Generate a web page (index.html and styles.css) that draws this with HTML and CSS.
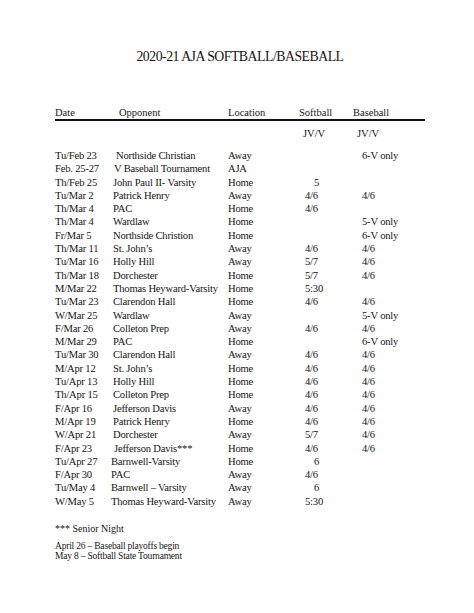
FILE: index.html
```html
<!DOCTYPE html>
<html>
<head>
<meta charset="utf-8">
<link rel="stylesheet" href="styles.css">
</head>
<body>
<div class="page">
  <h1 class="title">2020-21 AJA SOFTBALL/BASEBALL</h1>
  <div class="head">
    <span class="h-date">Date</span>
    <span class="h-opp">Opponent</span>
    <span class="h-loc">Location</span>
    <span class="h-sb">Softball</span>
    <span class="h-bb">Baseball</span>
  </div>
  <div class="sub">
    <span class="s-sb">JV/V</span>
    <span class="s-bb">JV/V</span>
  </div>
  <div class="rows">
    <div class="row"><span>Tu/Feb 23</span><span class="ind">Northside Christian</span><span>Away</span><span></span><span>6-V only</span></div>
    <div class="row"><span>Feb. 25-27</span><span class="ind1">V Baseball Tournament</span><span>AJA</span><span></span><span></span></div>
    <div class="row"><span>Th/Feb 25</span><span>John Paul II- Varsity</span><span>Home</span><span class="c">5</span><span></span></div>
    <div class="row"><span>Tu/Mar 2</span><span>Patrick Henry</span><span>Away</span><span>4/6</span><span>4/6</span></div>
    <div class="row"><span>Th/Mar 4</span><span>PAC</span><span>Home</span><span>4/6</span><span></span></div>
    <div class="row"><span>Th/Mar 4</span><span>Wardlaw</span><span>Home</span><span></span><span>5-V only</span></div>
    <div class="row"><span>Fr/Mar 5</span><span>Northside Christion</span><span>Home</span><span></span><span>6-V only</span></div>
    <div class="row"><span>Th/Mar 11</span><span>St. John’s</span><span>Away</span><span>4/6</span><span>4/6</span></div>
    <div class="row"><span>Tu/Mar 16</span><span>Holly Hill</span><span>Away</span><span>5/7</span><span>4/6</span></div>
    <div class="row"><span>Th/Mar 18</span><span>Dorchester</span><span>Home</span><span>5/7</span><span>4/6</span></div>
    <div class="row"><span>M/Mar 22</span><span>Thomas Heyward-Varsity</span><span>Home</span><span>5:30</span><span></span></div>
    <div class="row"><span>Tu/Mar 23</span><span>Clarendon Hall</span><span>Home</span><span>4/6</span><span>4/6</span></div>
    <div class="row"><span>W/Mar 25</span><span>Wardlaw</span><span>Away</span><span></span><span>5-V only</span></div>
    <div class="row"><span>F/Mar 26</span><span>Colleton Prep</span><span>Away</span><span>4/6</span><span>4/6</span></div>
    <div class="row"><span>M/Mar 29</span><span>PAC</span><span>Home</span><span></span><span>6-V only</span></div>
    <div class="row"><span>Tu/Mar 30</span><span>Clarendon Hall</span><span>Away</span><span>4/6</span><span>4/6</span></div>
    <div class="row"><span>M/Apr 12</span><span>St. John’s</span><span>Home</span><span>4/6</span><span>4/6</span></div>
    <div class="row"><span>Tu/Apr 13</span><span>Holly Hill</span><span>Home</span><span>4/6</span><span>4/6</span></div>
    <div class="row"><span>Th/Apr 15</span><span>Colleton Prep</span><span>Home</span><span>4/6</span><span>4/6</span></div>
    <div class="row"><span>F/Apr 16</span><span>Jefferson Davis</span><span>Away</span><span>4/6</span><span>4/6</span></div>
    <div class="row"><span>M/Apr 19</span><span>Patrick Henry</span><span>Home</span><span>4/6</span><span>4/6</span></div>
    <div class="row"><span>W/Apr 21</span><span>Dorchester</span><span>Away</span><span>5/7</span><span>4/6</span></div>
    <div class="row"><span>F/Apr 23</span><span class="ind1">Jefferson Davis***</span><span>Home</span><span>4/6</span><span>4/6</span></div>
    <div class="row"><span>Tu/Apr 27</span><span class="out">Barnwell-Varsity</span><span>Home</span><span class="c">6</span><span></span></div>
    <div class="row"><span>F/Apr 30</span><span class="out">PAC</span><span>Away</span><span>4/6</span><span></span></div>
    <div class="row"><span>Tu/May 4</span><span class="out">Barnwell – Varsity</span><span>Away</span><span class="c">6</span><span></span></div>
    <div class="row"><span>W/May 5</span><span class="out">Thomas Heyward-Varsity</span><span>Away</span><span>5:30</span><span></span></div>
  </div>
  <p class="note">*** Senior Night</p>
  <div class="foot">
    <p>April 26 – Baseball playoffs begin</p>
    <p>May 8 – Softball State Tournament</p>
  </div>
</div>
</body>
</html>
```
FILE: styles.css
```css
html, body {
  margin: 0;
  padding: 0;
  background: #ffffff;
}
body {
  font-family: "Liberation Serif", "Times New Roman", serif;
  color: #151515;
}
.page {
  width: 474px;
  height: 613px;
  box-sizing: border-box;
  padding: 48px 49px 0 55px;
}
.title {
  margin: 0;
  font-weight: normal;
  font-size: 13.8px;
  line-height: 18px;
  text-align: center;
  padding-left: 0;
  letter-spacing: -0.5px;
}
.head {
  margin-top: 40px;
  display: grid;
  grid-template-columns: 64px 109px 71px 54px auto;
  font-size: 10.5px;
  line-height: 13px;
  padding-bottom: 0;
  border-bottom: 2px solid #111;
}
.sub {
  display: grid;
  grid-template-columns: 244px 54px auto;
  font-size: 10.5px;
  line-height: 14px;
  margin-top: 6px;
}
.s-sb { grid-column: 2; padding-left: 4px; }
.s-bb { grid-column: 3; padding-left: 4px; }
.rows {
  margin-top: 8px;
}
.row {
  display: grid;
  grid-template-columns: 58px 115px 77px 57px auto;
  font-size: 10.6px;
  letter-spacing: -0.2px;
  line-height: 13.3px;
  white-space: nowrap;
}
.row .ind { padding-left: 3px; }
.row .ind1 { padding-left: 1px; }
.row .out { margin-left: -2px; }
.row .c { padding-left: 9px; }
.note {
  margin: 14px 0 0;
  font-size: 10px;
  line-height: 13px;
}
.foot {
  margin-top: 6px;
  font-size: 9.5px;
  letter-spacing: -0.2px;
  line-height: 10px;
}
.foot p { margin: 0; }
```
